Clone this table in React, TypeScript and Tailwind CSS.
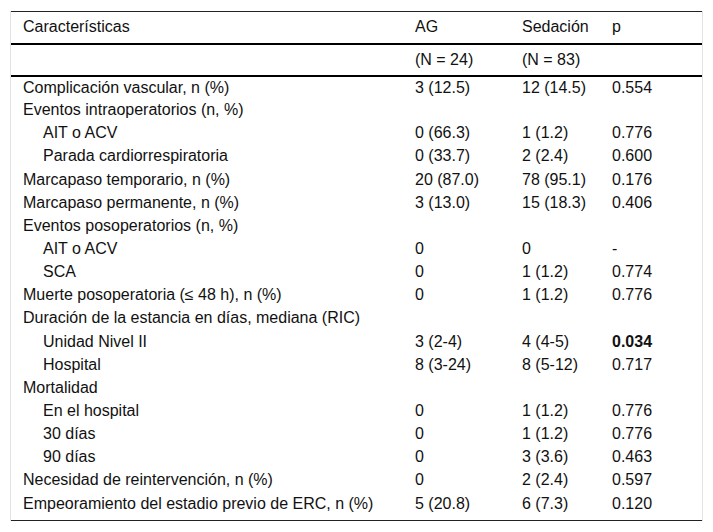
import React from 'react'

type Row = {
  label: string
  ag: string
  sed: string
  p: string
  indent?: boolean
  bold?: boolean
}

const rows: Row[] = [
  { label: 'Complicación vascular, n (%)', ag: '3 (12.5)', sed: '12 (14.5)', p: '0.554' },
  { label: 'Eventos intraoperatorios (n, %)', ag: '', sed: '', p: '' },
  { label: 'AIT o ACV', ag: '0 (66.3)', sed: '1 (1.2)', p: '0.776', indent: true },
  { label: 'Parada cardiorrespiratoria', ag: '0 (33.7)', sed: '2 (2.4)', p: '0.600', indent: true },
  { label: 'Marcapaso temporario, n (%)', ag: '20 (87.0)', sed: '78 (95.1)', p: '0.176' },
  { label: 'Marcapaso permanente, n (%)', ag: '3 (13.0)', sed: '15 (18.3)', p: '0.406' },
  { label: 'Eventos posoperatorios (n, %)', ag: '', sed: '', p: '' },
  { label: 'AIT o ACV', ag: '0', sed: '0', p: '-', indent: true },
  { label: 'SCA', ag: '0', sed: '1 (1.2)', p: '0.774', indent: true },
  { label: 'Muerte posoperatoria (≤ 48 h), n (%)', ag: '0', sed: '1 (1.2)', p: '0.776' },
  { label: 'Duración de la estancia en días, mediana (RIC)', ag: '', sed: '', p: '' },
  { label: 'Unidad Nivel II', ag: '3 (2-4)', sed: '4 (4-5)', p: '0.034', indent: true, bold: true },
  { label: 'Hospital', ag: '8 (3-24)', sed: '8 (5-12)', p: '0.717', indent: true },
  { label: 'Mortalidad', ag: '', sed: '', p: '' },
  { label: 'En el hospital', ag: '0', sed: '1 (1.2)', p: '0.776', indent: true },
  { label: '30 días', ag: '0', sed: '1 (1.2)', p: '0.776', indent: true },
  { label: '90 días', ag: '0', sed: '3 (3.6)', p: '0.463', indent: true },
  { label: 'Necesidad de reintervención, n (%)', ag: '0', sed: '2 (2.4)', p: '0.597' },
  { label: 'Empeoramiento del estadio previo de ERC, n (%)', ag: '5 (20.8)', sed: '6 (7.3)', p: '0.120' },
]

export default function App() {
  return (
    <div className="w-[713px] h-[532px] bg-white pl-[10px] pt-[11px] text-[#111] text-[16px] leading-[20px] font-['Liberation_Sans',Arial,sans-serif]">
      <div className="w-[693px] border-x border-[#e2e2e2]">
        <table className="w-full table-fixed border-collapse">
          <colgroup>
            <col className="w-[392px]" />
            <col className="w-[107px]" />
            <col className="w-[90px]" />
            <col />
          </colgroup>
          <thead>
            <tr className="border-t border-b-2 border-t-[#222] border-b-black h-[32px]">
              <th className="text-left font-normal pl-3">Características</th>
              <th className="text-left font-normal pl-3">AG</th>
              <th className="text-left font-normal pl-3">Sedación</th>
              <th className="text-left font-normal pl-3">p</th>
            </tr>
            <tr className="border-b-2 border-black h-[32px]">
              <th className="pl-3" />
              <th className="text-left font-normal pl-3">(N = 24)</th>
              <th className="text-left font-normal pl-3">(N = 83)</th>
              <th className="pl-3" />
            </tr>
          </thead>
          <tbody className="border-b border-[#222]">
            {rows.map((r, i) => (
              <tr key={i} className="h-[23.15px]">
                <td className={r.indent ? 'pl-8' : 'pl-3'}>{r.label}</td>
                <td className="pl-3">{r.ag}</td>
                <td className="pl-3">{r.sed}</td>
                <td className={r.bold ? 'pl-3 font-bold' : 'pl-3'}>{r.p}</td>
              </tr>
            ))}
            <tr className="h-[5px]">
              <td colSpan={4} />
            </tr>
          </tbody>
        </table>
      </div>
    </div>
  )
}
